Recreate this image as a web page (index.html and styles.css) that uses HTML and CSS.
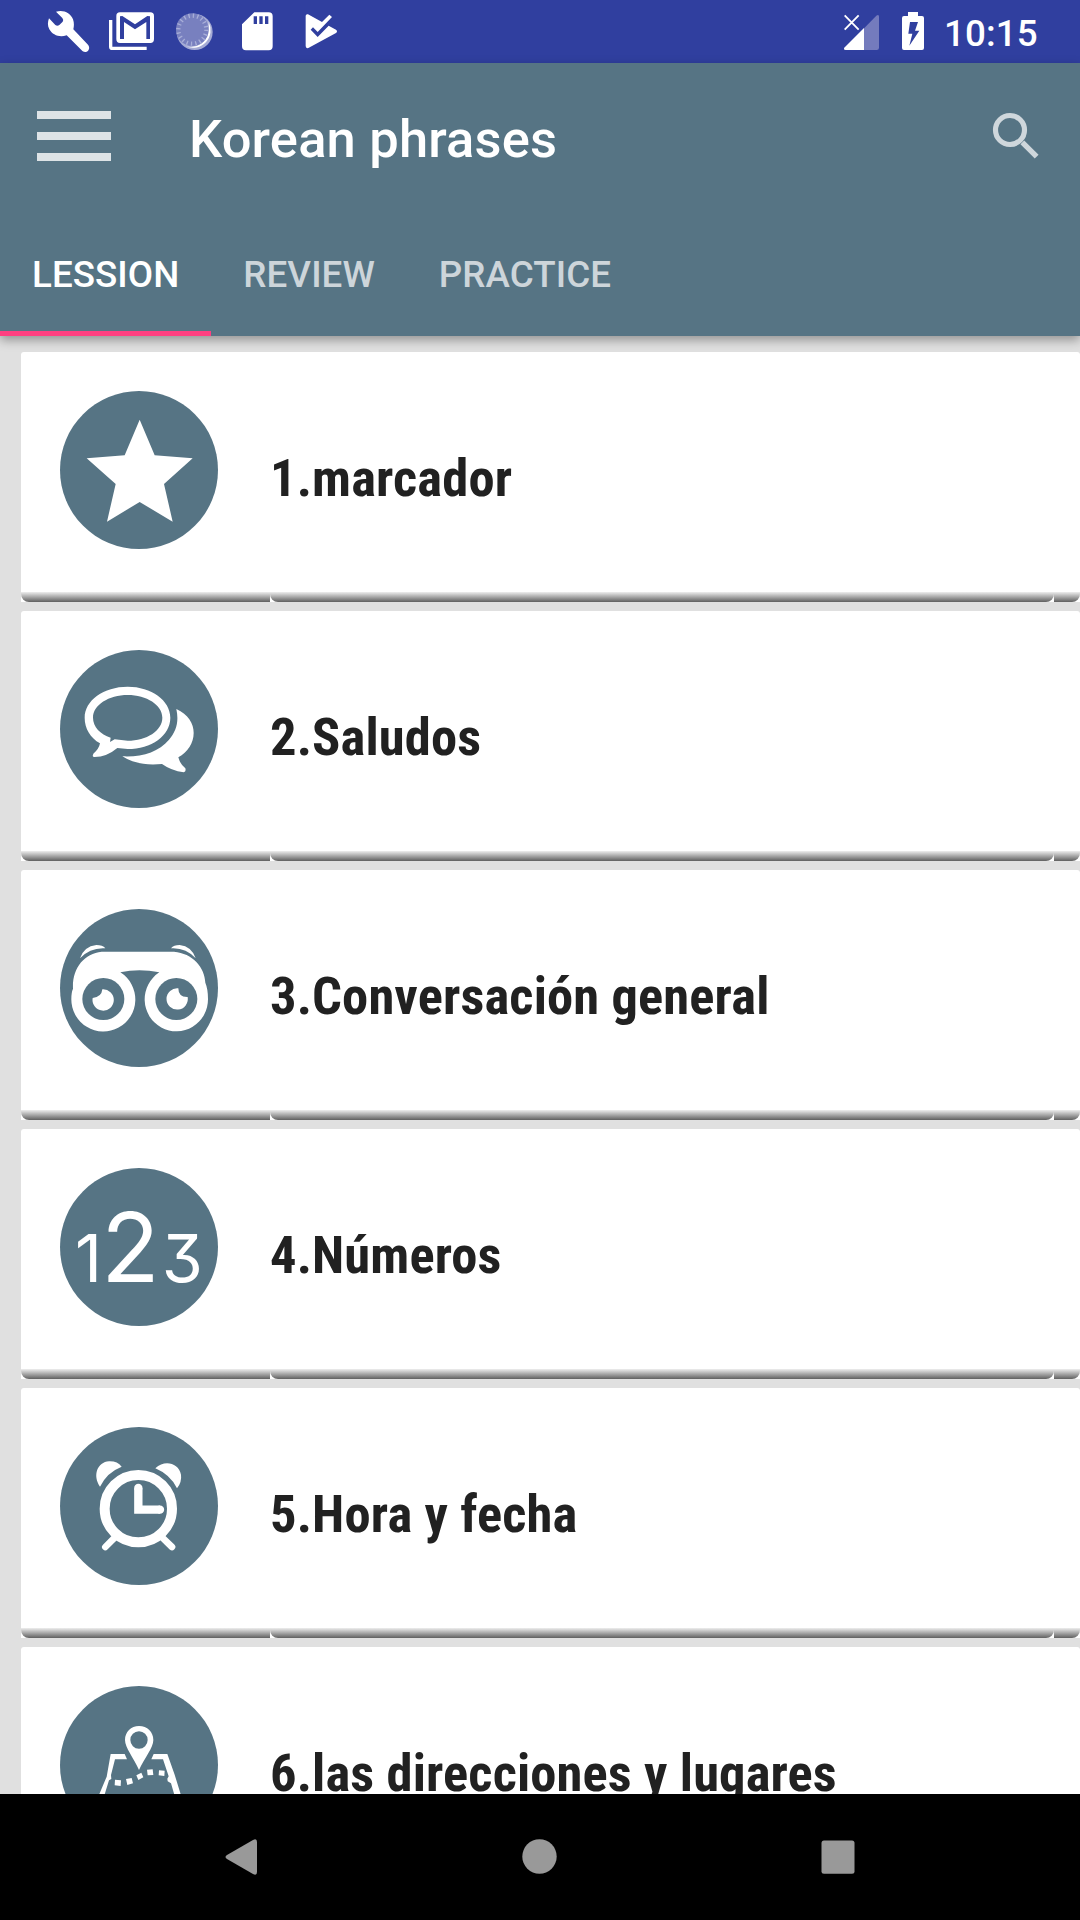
FILE: index.html
```html
<!DOCTYPE html>
<html lang="es">
<head>
  <meta charset="UTF-8">
  <title>Korean phrases</title>
  <meta name="viewport" content="width=device-width, initial-scale=1.0">
  <link rel="stylesheet" href="styles.css">
</head>
<body>

  <div class="status-bar">
    <svg class="notifications" width="360" height="63" viewBox="0 0 1080 189" fill="#fff">
      <path d="M168 35C189 28 212 38 219 58C223 70 222 79 220 88L264 134C270 141 268 151 260 155C254 158 249 155 245 151L200 106C179 113 158 106 148 88C142 77 143 66 147 55L166 75Q172 80 178 75L188 65Q192 60 187 54Z"/>
      <path d="M327 60H337V140H440V150H337Q327 150 327 140Z"/>
      <path fill-rule="evenodd" d="M360 37H451Q462 37 462 48V117Q462 129 451 129H360Q349 129 349 117V48Q349 37 360 37ZM360 49V117H372V66L405 88L439 66V117H450V49L442 48L405 73L367 48Z"/>
      <circle cx="584" cy="96" r="54" fill="#a5abd5"/>
      <path d="M626 66A53 53 0 0 1 558 139Q585 145 606 130Q630 110 626 66Z"/>
      <circle cx="577" cy="89" r="49" fill="#7880bf"/>
      <circle cx="577" cy="89" r="42" fill="none" stroke="#a8aed8" stroke-width="13" stroke-dasharray="4 9.2"/>
      <path fill-rule="evenodd" d="M763 37H806Q818 37 818 49V139Q818 151 806 151H738Q726 151 726 139V73ZM761 49V72H771V49ZM778 49V72H788V49ZM795 49V72H805V49Z"/>
      <path d="M917 47Q918 41 924 43L966 66L988 44L996 51L953 96L939 82L932 89L953 111L986 77L1008 89Q1014 94 1008 99L925 144Q917 146 917 138Z"/>
    </svg>
    <div class="status-right">
      <svg width="120" height="63" viewBox="90 0 360 189" fill="#fff">
        <path fill="#747bbd" d="M132 146L229 47Q237 42 237 50V143Q237 150 230 150H137Q130 150 132 146Z"/>
        <path d="M132 144L192 84V150H137Q131 150 132 144Z"/>
        <path d="M134 46L176 89M176 46L134 89" stroke="#303f9f" stroke-width="12"/>
        <path d="M134 46L176 89M176 46L134 89" stroke="#fff" stroke-width="5.5"/>
        <path fill-rule="evenodd" d="M324 36H354V48H366Q372 48 372 54V144Q372 150 366 150H312Q306 150 306 144V54Q306 48 312 48H324ZM330 66L325 101H337L328 137L358 92H345L354 66Z"/>
      </svg>
      <span class="time">10:15</span>
    </div>
  </div>

  <header class="header">
    <div class="toolbar">
      <div class="menu"><i></i><i></i><i></i></div>
      <h1>Korean phrases</h1>
      <svg class="search" width="48" height="48" viewBox="576 336 144 144" fill="none" stroke="#cfd7dc">
        <circle cx="630" cy="390" r="43.5" stroke-width="15.5"/>
        <path d="M667 427L710 470" stroke-width="16"/>
      </svg>
    </div>
    <nav class="tabs">
      <a class="tab active">LESSION</a>
      <a class="tab">REVIEW</a>
      <a class="tab">PRACTICE</a>
    </nav>
  </header>

  <main class="list">
    <div class="row">
      <div class="cell icon">
        <svg viewBox="0 0 474 474">
          <circle class="disc" cx="237" cy="237" r="237"/>
          <path d="M239 86L284 193L398 202L312 279L338 392L239 333L141 392L167 279L80 202L194 193Z"/>
        </svg>
      </div>
      <div class="cell name"><span>1.marcador</span></div>
      <div class="cell end"></div>
    </div>

    <div class="row">
      <div class="cell icon">
        <svg viewBox="60 60 474 474">
          <circle class="disc" cx="297" cy="297" r="237"/>
          <path fill-rule="evenodd" d="M263 170C334 170 391 211 391 263C391 317 334 357 263 357L232 354Q199 382 161 381Q156 378 160 371Q177 357 180 340C151 323 134 296 134 263C134 211 191 170 263 170ZM263 195C206 195 159 225 159 263C159 290 181 313 212 323L210 336L224 328L263 332C320 332 367 302 367 263C367 225 320 195 263 195Z"/>
          <path d="M409 237C445 254 461 281 461 309C461 339 443 366 415 382Q420 402 436 415Q439 425 431 427Q394 422 366 402C318 407 277 399 247 379C306 382 355 366 387 329C410 303 417 273 409 237Z"/>
        </svg>
      </div>
      <div class="cell name"><span>2.Saludos</span></div>
      <div class="cell end"></div>
    </div>

    <div class="row">
      <div class="cell icon">
        <svg viewBox="60 57 474 474">
          <circle class="disc" cx="297" cy="294" r="237"/>
          <path d="M120 205Q132 169 169 165Q188 165 196 175Q151 172 120 205ZM467 205Q455 169 419 165Q401 165 393 175Q437 172 467 205Z"/>
          <path d="M185 185H402C458 190 494 231 496 278Q504 297 504 327A95 96 0 1 1 358 247Q297 235 241 247A96 96 0 1 1 94 327Q94 307 99 296C96 236 132 190 185 185Z"/>
          <circle class="disc" cx="190" cy="327" r="63"/>
          <circle class="disc" cx="409" cy="327" r="63"/>
          <path d="M187 298A32 32 0 1 1 158 324Q185 321 187 298ZM415 295A32 32 0 1 0 443 321Q415 322 415 295Z"/>
        </svg>
      </div>
      <div class="cell name"><span>3.Conversación general</span></div>
      <div class="cell end"></div>
    </div>

    <div class="row">
      <div class="cell icon">
        <svg class="digits" viewBox="60 54 474 474">
          <circle class="disc" cx="297" cy="291" r="237"/>
          <text x="105" y="395" font-size="199">1</text>
          <text x="184" y="395" font-size="287">2</text>
          <text x="365" y="395" font-size="199">3</text>
        </svg>
      </div>
      <div class="cell name"><span>4.Números</span></div>
      <div class="cell end"></div>
    </div>

    <div class="row">
      <div class="cell icon">
        <svg viewBox="60 51 474 474">
          <circle class="disc" cx="297" cy="288" r="237"/>
          <circle cx="295" cy="296" r="101" fill="none" stroke="#fff" stroke-width="30"/>
          <path d="M180 230C157 197 172 156 207 154Q232 153 245 170Q201 187 180 230ZM346 175C374 148 416 159 423 194Q426 216 411 235Q391 194 346 175Z"/>
          <path d="M295 235V299H360" fill="none" stroke="#fff" stroke-width="25"/>
          <circle cx="295" cy="234" r="12.5"/>
          <circle cx="360" cy="299" r="12.5"/>
          <path d="M224 383L196 411M367 383L396 411" stroke="#fff" stroke-width="20" stroke-linecap="round"/>
        </svg>
      </div>
      <div class="cell name"><span>5.Hora y fecha</span></div>
      <div class="cell end"></div>
    </div>

    <div class="row">
      <div class="cell icon">
        <svg viewBox="180 198 474 474">
          <circle class="disc" cx="417" cy="435" r="237"/>
          <path fill-rule="evenodd" d="M417 318C442 318 460 336 460 360C460 383 434 414 417 450C401 414 375 383 375 360C375 336 393 318 417 318ZM417 334A26 26 0 1 0 417 386A26 26 0 1 0 417 334Z"/>
          <path d="M332 402H374L381 418H345L333 465L334 477L327 481L301 565H280L320 470ZM454 418L461 402H502L524 464L555 565H535L513 490L503 484L502 476L506 469L489 418Z"/>
          <path d="M345 479L363 481L362 498L344 496ZM378 477L395 474L399 490L382 495ZM409 466L424 458L430 472L415 480ZM441 449L458 448L460 465L443 466ZM477 451L494 452L493 468L476 466Z"/>
        </svg>
      </div>
      <div class="cell name"><span>6.las direcciones y lugares</span></div>
      <div class="cell end"></div>
    </div>
  </main>

  <footer class="nav-bar">
    <svg width="1080" height="126" viewBox="0 0 1080 126" fill="#999">
      <path d="M227 61L253 46Q257 44 257 48V78Q257 82 253 80L227 65Q224 63 227 61Z"/>
      <circle cx="539.5" cy="62.5" r="17.2"/>
      <rect x="821.5" y="46.5" width="33" height="33.3" rx="2.5"/>
    </svg>
  </footer>

</body>
</html>
```

FILE: styles.css
```css
body {
  margin: 0;
  width: 1080px;
  height: 1920px;
  display: flex;
  flex-direction: column;
  overflow: hidden;
  background-color: #e0e0e0;
  font-family: Roboto, "Liberation Sans", sans-serif;
}

svg {
  display: block;
}

.status-bar {
  height: 63px;
  flex-shrink: 0;
  display: flex;
  justify-content: space-between;
  background-color: #303f9f;
}

.status-right {
  display: flex;
  padding-right: 41px;
}

.time {
  width: 95px;
  margin-left: -6px;
  color: #fff;
  font-size: 36.75px;
  font-weight: 500;
  letter-spacing: 0.1px;
  line-height: 67px;
}

.header {
  position: relative;
  z-index: 1;
  height: 273px;
  flex-shrink: 0;
  background-color: #567484;
  box-shadow: 0 4px 10px rgba(0,0,0,0.35);
}

.toolbar {
  height: 145px;
  padding-bottom: 2px;
  display: flex;
  align-items: center;
}

.menu {
  width: 74px;
  height: 50px;
  margin-left: 37px;
  display: flex;
  flex-direction: column;
  justify-content: space-between;
}

.menu i {
  height: 8px;
  background-color: #dde3e6;
}

.toolbar h1 {
  flex: 1;
  margin: 0 0 0 78px;
  padding-top: 7px;
  color: #fff;
  font-size: 52.5px;
  font-weight: 500;
  letter-spacing: 0.17px;
  white-space: nowrap;
}

.search {
  margin-right: 40px;
}

.tabs {
  height: 126px;
  display: flex;
}

.tab {
  box-sizing: border-box;
  padding: 0 32px;
  color: #cdd5da;
  font-size: 36.75px;
  font-weight: 500;
  letter-spacing: 0.06px;
  line-height: 130px;
}

.tab.active {
  height: 126px;
  color: #fff;
  border-bottom: 5px solid #ff4081;
}

.list {
  height: 1458px;
  flex-shrink: 0;
  box-sizing: border-box;
  padding: 16px 0 0 21px;
  overflow: hidden;
}

.row {
  height: 250px;
  margin-bottom: 9px;
  display: flex;
  background-color: #fff;
  border-radius: 3px 3px 0 0;
}

.cell {
  box-sizing: border-box;
  height: 250px;
  border-radius: 0 0 8px 8px;
  background: linear-gradient(#eee, #606060) bottom / 100% 10px no-repeat;
}

.icon {
  width: 249px;
  padding: 39px;
  border-radius: 0 0 0 8px;
}

.icon svg {
  width: 158px;
  height: 158px;
  fill: #fff;
}

.icon .disc {
  fill: #567484;
}

/* plain 1 and flat-top 3 */
.digits text {
  font-family: Inter, sans-serif;
  font-weight: 400;
  font-feature-settings: "cv09";
}

.name {
  width: 784px;
  padding-top: 95px;
  color: #212121;
  font-family: "Roboto Condensed", Roboto, sans-serif;
  font-stretch: 75%;
  font-size: 52.5px;
  font-weight: 700;
  letter-spacing: 0.14px;
  line-height: 62px;
  white-space: nowrap;
}

.end {
  width: 26px;
  border-radius: 0 0 8px 0;
}

.nav-bar {
  height: 126px;
  flex-shrink: 0;
  background-color: #000;
}
```
